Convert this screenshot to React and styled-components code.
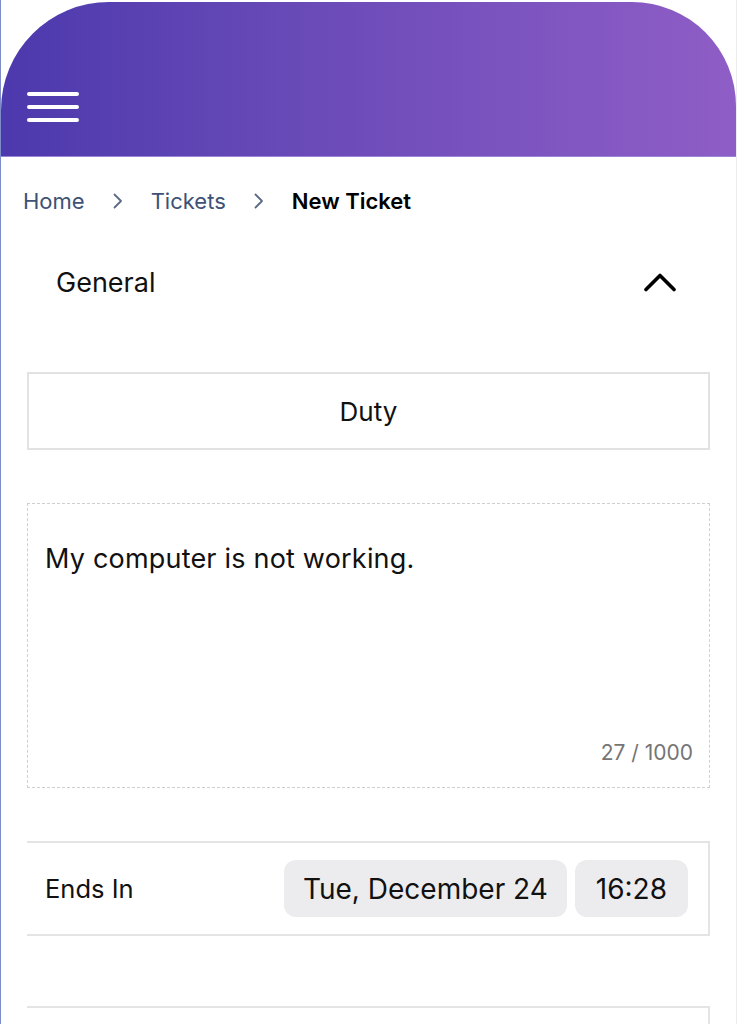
import styled, { createGlobalStyle } from 'styled-components'

const GlobalStyle = createGlobalStyle`
    html, body {
        margin: 0;
        padding: 0;
        background: #fff;
    }
    body {
        font-family: Inter, "Liberation Sans", Arial, sans-serif;
        color: #111;
    }
`

export default function App(){
    return(
        <>
            <GlobalStyle />
            <Frame>
                <Header>
                    <MenuButton aria-label="Menu">
                        <span /><span /><span />
                    </MenuButton>
                </Header>

                <Breadcrumb>
                    <Crumb>Home</Crumb>
                    <Separator />
                    <Crumb>Tickets</Crumb>
                    <Separator />
                    <Crumb current>New Ticket</Crumb>
                </Breadcrumb>

                <SectionHead>
                    <SectionTitle>General</SectionTitle>
                    <svg width="32" height="20" viewBox="0 0 32 20" fill="none">
                        <path d="M2 17.5 L16 3.5 L30 17.5" stroke="#000" strokeWidth="3.6" strokeLinecap="round" strokeLinejoin="round"/>
                    </svg>
                </SectionHead>

                <Form>
                    <SelectBox>Duty</SelectBox>

                    <TextArea>
                        <Message>My computer is not working.</Message>
                        <Counter>27 / 1000</Counter>
                    </TextArea>

                    <DateRow>
                        <RowLabel>Ends In</RowLabel>
                        <Pills>
                            <Pill $pad={19}>Tue, December 24</Pill>
                            <Pill $pad={21}>16:28</Pill>
                        </Pills>
                    </DateRow>

                    <NextRow />
                </Form>
            </Frame>
        </>
    )
}

function Separator(){
    return(
        <SepIcon width="10" height="16" viewBox="0 0 10 16" fill="none">
            <path d="M1.5 1.5 L8 8 L1.5 14.5" stroke="#5b6a86" strokeWidth="1.8" strokeLinecap="round" strokeLinejoin="round"/>
        </SepIcon>
    )
}

const Frame = styled.div`
    width: 737px;
    height: 1024px;
    border-left: 1px solid #7d8dca;
    border-right: 1px solid #ececec;
    box-sizing: border-box;
    overflow: hidden;
    background: #fff;
`

const Header = styled.header`
    margin-top: 2px;
    height: 155px;
    border-radius: 108px 104px 0 0;
    background: linear-gradient(90deg, #4c39ad 0%, #6548b6 35%, #7c54bf 70%, #8f5dc6 100%);
    border-bottom: 1px solid #9a86d8;
    display: flex;
    align-items: flex-end;
    padding: 0 0 34px 26px;
    box-sizing: border-box;
`

const MenuButton = styled.div`
    display: flex;
    flex-direction: column;
    gap: 9px;
    span{
        display: block;
        width: 52px;
        height: 4px;
        border-radius: 2px;
        background: #fff;
    }
`

const Breadcrumb = styled.nav`
    display: flex;
    align-items: center;
    height: 30px;
    margin: 29px 0 0 22px;
    font-size: 22px;
`

const Crumb = styled.span`
    color: ${p => p.current ? '#000' : '#3d5275'};
    font-weight: ${p => p.current ? 600 : 400};
`

const SepIcon = styled.svg`
    margin: 0 28px;
`

const SectionHead = styled.div`
    display: flex;
    align-items: center;
    justify-content: space-between;
    height: 60px;
    margin: 36px 0 0;
    padding: 0 60px 0 55px;
`

const SectionTitle = styled.span`
    font-size: 27px;
`

const Form = styled.div`
    display: flex;
    flex-direction: column;
    gap: 53px;
    margin: 60px 26px 0 26px;
`

const SelectBox = styled.div`
    height: 78px;
    border: 2px solid #e2e2e2;
    box-sizing: border-box;
    display: flex;
    align-items: center;
    justify-content: center;
    font-size: 26px;
`

const TextArea = styled.div`
    height: 285px;
    border: 1.5px dashed #cfcfcf;
    box-sizing: border-box;
    display: flex;
    flex-direction: column;
    justify-content: space-between;
    padding: 40px 16px 21px 17px;
`

const Message = styled.div`
    font-size: 27px;
    letter-spacing: 0.2px;
    line-height: 30px;
`

const Counter = styled.div`
    align-self: flex-end;
    font-size: 21px;
    line-height: 26px;
    color: #757575;
`

const DateRow = styled.div`
    height: 95px;
    border: 2px solid #e4e4e4;
    border-left: none;
    box-sizing: border-box;
    display: flex;
    align-items: center;
    justify-content: space-between;
    padding: 0 20px 0 18px;
`

const RowLabel = styled.span`
    font-size: 25.5px;
`

const Pills = styled.div`
    display: flex;
    gap: 8px;
`

const Pill = styled.span`
    height: 57px;
    padding: 0 ${p => p.$pad}px;
    display: flex;
    align-items: center;
    border-radius: 12px;
    background: #ececee;
    font-size: 28px;
`

const NextRow = styled.div`
    height: 95px;
    margin-top: 17px;
    border: 2px solid #e4e4e4;
    border-left: none;
    box-sizing: border-box;
`
